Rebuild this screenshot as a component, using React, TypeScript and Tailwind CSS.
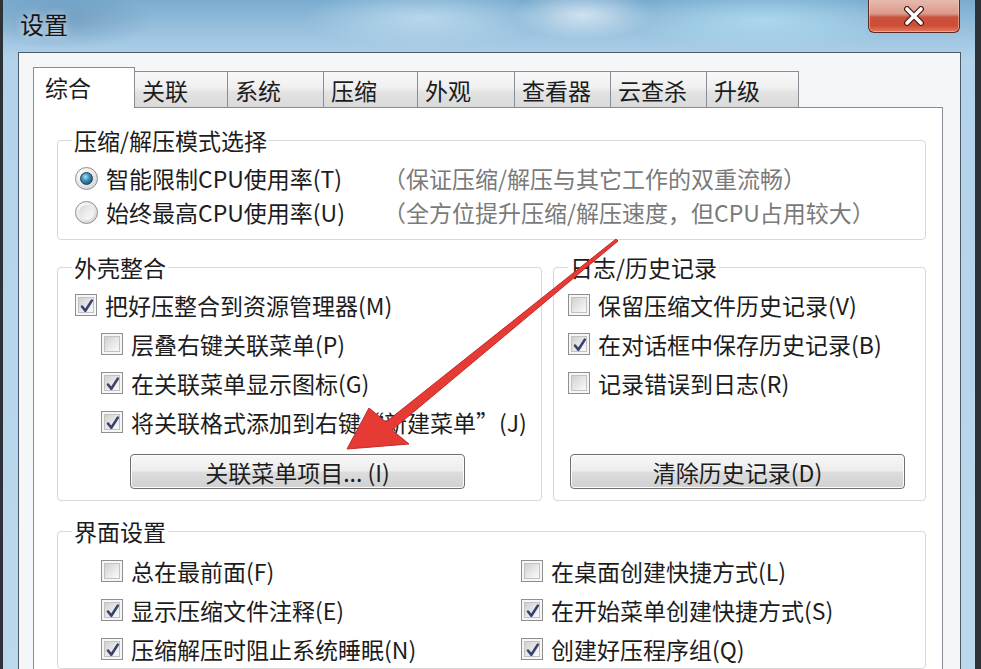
import React from 'react';

const tabs = [
  { label: '关联', w: 'w-[93px]' },
  { label: '系统', w: 'w-[96px]' },
  { label: '压缩', w: 'w-[94px]' },
  { label: '外观', w: 'w-[97px]' },
  { label: '查看器', w: 'w-[96px]' },
  { label: '云查杀', w: 'w-[96px]' },
  { label: '升级', w: 'w-[92px]' },
];

function CheckBox({ checked }: { checked?: boolean }) {
  return (
    <span className="relative flex h-[22px] w-[22px] shrink-0 items-center justify-center border border-[#8f8f8f] bg-[#f6f6f6]">
      <span className="h-[16px] w-[16px] border border-[#c2c2c2] bg-[linear-gradient(135deg,#d0d0d0_0%,#e6e6e6_50%,#fbfbfb_100%)]" />
      {checked && (
        <svg className="absolute left-0 top-0" width="22" height="22" viewBox="0 0 22 22">
          <path
            d="M6 11.5 L9.3 15.8 L15.8 5.6"
            fill="none"
            stroke="#38426f"
            strokeWidth="2.6"
            strokeLinecap="round"
            strokeLinejoin="round"
          />
        </svg>
      )}
    </span>
  );
}

function Radio({ checked }: { checked?: boolean }) {
  return (
    <span className="flex h-[23px] w-[23px] shrink-0 items-center justify-center rounded-full border border-[#8e8f8f] bg-[radial-gradient(circle_at_35%_30%,#ffffff_0%,#e4e4e4_60%,#c9c9c9_100%)]">
      {checked ? (
        <span className="h-[13px] w-[13px] rounded-full border border-[#1c3f55] bg-[radial-gradient(circle_at_40%_35%,#a9e4f7_0%,#3d8fb8_40%,#143e5c_100%)]" />
      ) : (
        <span className="h-[15px] w-[15px] rounded-full bg-[linear-gradient(135deg,#d4d4d4_0%,#ececec_50%,#fafafa_100%)]" />
      )}
    </span>
  );
}

function Check({ checked, label, className = '' }: { checked?: boolean; label: string; className?: string }) {
  return (
    <div className={`flex h-[39px] items-center gap-[8px] ${className}`}>
      <CheckBox checked={checked} />
      <span className="whitespace-nowrap">{label}</span>
    </div>
  );
}

function WinButton({ label, className = '' }: { label: string; className?: string }) {
  return (
    <div
      className={`flex h-[35px] w-[335px] items-center justify-center rounded-[4px] border border-[#707070] bg-[linear-gradient(180deg,#f7f7f7_0%,#ededed_48%,#dddddd_52%,#d0d0d0_100%)] shadow-[inset_0_0_0_1px_#fbfbfb] ${className}`}
    >
      {label}
    </div>
  );
}

export default function App() {
  return (
    <div className="relative flex h-[669px] w-[981px] overflow-hidden bg-[#2c3238] font-['Noto_Sans_CJK_SC',sans-serif] text-[23px] leading-[28px] text-[#1c1c1c]">
      <div className="ml-[3px] flex w-[972px] flex-col bg-[radial-gradient(ellipse_90px_30px_at_60px_20px,rgba(70,110,150,0.35),transparent),radial-gradient(ellipse_120px_30px_at_420px_18px,rgba(220,240,250,0.55),transparent),radial-gradient(ellipse_70px_25px_at_580px_15px,rgba(255,255,255,0.6),transparent),radial-gradient(ellipse_140px_30px_at_760px_20px,rgba(190,235,250,0.6),transparent),linear-gradient(180deg,#7aaccf_0px,#98c1de_30px,#b3d3ea_60px,#bcd8ec_100%)]">
        {/* title bar */}
        <div className="flex h-[52px] shrink-0 items-start justify-between">
          <div className="pl-[17px] pt-[9px] text-[24px] leading-[30px] text-[#161616] [text-shadow:0_0_8px_rgba(255,255,255,0.8)]">
            设置
          </div>
          <div className="mr-[15px] -mt-px flex h-[34px] w-[92px] items-center justify-center rounded-b-[6px] border border-t-0 border-[#5b2a22] bg-[linear-gradient(180deg,#e8bcb1_0%,#db9a8b_45%,#c9533d_55%,#cf4c35_80%,#e07b5e_100%)] shadow-[inset_0_0_0_1px_rgba(255,220,210,0.45)]">
            <svg width="24" height="20" viewBox="0 0 24 20">
              <path d="M5 3 L19 17 M19 3 L5 17" stroke="#4a1c16" strokeWidth="6" strokeLinecap="round" />
              <path d="M5 3 L19 17 M19 3 L5 17" stroke="#ffffff" strokeWidth="3.6" strokeLinecap="round" />
            </svg>
          </div>
        </div>

        {/* client area */}
        <div className="ml-[15px] mr-[14px] flex flex-1 flex-col border-x border-t border-[#4d5966] bg-[#f5f6f7] pl-[14px] pr-[17px] pt-[14px]">
          <div className="flex h-[41px] items-end">
            <div className="relative z-10 h-[41px] w-[102px] border-x border-t border-[#898c95] bg-white pl-[11px] pt-[5px]">
              综合
            </div>
            {tabs.map((t) => (
              <div
                key={t.label}
                className={`h-[37px] ${t.w} border-r border-t border-[#898c95] bg-[linear-gradient(180deg,#f8f8f8_0%,#efefef_45%,#e3e3e3_55%,#d9d9d9_100%)] pl-[7px] pt-[4px]`}
              >
                {t.label}
              </div>
            ))}
          </div>

          <div className="-mt-px flex flex-1 flex-col border border-[#898c95] bg-white pl-[23px] pr-[16px] pt-[18px]">
            <fieldset className="rounded-[4px] border border-[#d5d9dc] px-[14px] pb-[10px] pt-[7px]">
              <legend className="px-[2px]">压缩/解压模式选择</legend>
              <div className="grid grid-cols-[311px_1fr]">
                <div className="ml-[3px] flex h-[34px] items-center gap-[8px]">
                  <Radio checked />
                  <span className="whitespace-nowrap">智能限制CPU使用率(T)</span>
                </div>
                <div className="flex h-[34px] items-center whitespace-nowrap text-[#7a7a7a]">
                  （保证压缩/解压与其它工作的双重流畅）
                </div>
                <div className="ml-[3px] flex h-[34px] items-center gap-[8px]">
                  <Radio />
                  <span className="whitespace-nowrap">始终最高CPU使用率(U)</span>
                </div>
                <div className="flex h-[34px] items-center whitespace-nowrap text-[#7a7a7a]">
                  （全方位提升压缩/解压速度，但CPU占用较大）
                </div>
              </div>
            </fieldset>

            <div className="mt-[13px] flex gap-[11px]">
              <fieldset className="flex w-[485px] flex-col rounded-[4px] border border-[#d5d9dc] px-[14px] pb-[11px] pt-[4px]">
                <legend className="px-[2px]">外壳整合</legend>
                <Check checked label="把好压整合到资源管理器(M)" className="ml-[3px]" />
                <Check label="层叠右键关联菜单(P)" className="ml-[29px]" />
                <Check checked label="在关联菜单显示图标(G)" className="ml-[29px]" />
                <Check checked label="将关联格式添加到右键“新建菜单”(J)" className="ml-[29px]" />
                <WinButton label="关联菜单项目... (I)" className="ml-[58px] mt-[13px]" />
              </fieldset>
              <fieldset className="flex flex-1 flex-col rounded-[4px] border border-[#d5d9dc] px-[14px] pb-[11px] pt-[4px]">
                <legend className="px-[2px]">日志/历史记录</legend>
                <Check label="保留压缩文件历史记录(V)" />
                <Check checked label="在对话框中保存历史记录(B)" />
                <Check label="记录错误到日志(R)" />
                <WinButton label="清除历史记录(D)" className="ml-[2px] mt-auto" />
              </fieldset>
            </div>

            <fieldset className="mt-[16px] rounded-[4px] border border-[#d5d9dc] px-[14px] pt-[6px]">
              <legend className="px-[2px]">界面设置</legend>
              <div className="grid grid-cols-[420px_1fr] pl-[29px]">
                <Check label="总在最前面(F)" />
                <Check label="在桌面创建快捷方式(L)" />
                <Check checked label="显示压缩文件注释(E)" />
                <Check checked label="在开始菜单创建快捷方式(S)" />
                <Check checked label="压缩解压时阻止系统睡眠(N)" />
                <Check checked label="创建好压程序组(Q)" />
              </div>
            </fieldset>
          </div>
        </div>
      </div>

      {/* red annotation arrow */}
      <svg className="pointer-events-none absolute left-0 top-0" width="981" height="669" viewBox="0 0 981 669">
        <polygon
          points="347,449 409,444 392,430 618,241 616,239 386,422 369,408"
          fill="#e63a35"
          stroke="#c42a27"
          strokeWidth="1"
          strokeLinejoin="round"
        />
      </svg>
    </div>
  );
}
